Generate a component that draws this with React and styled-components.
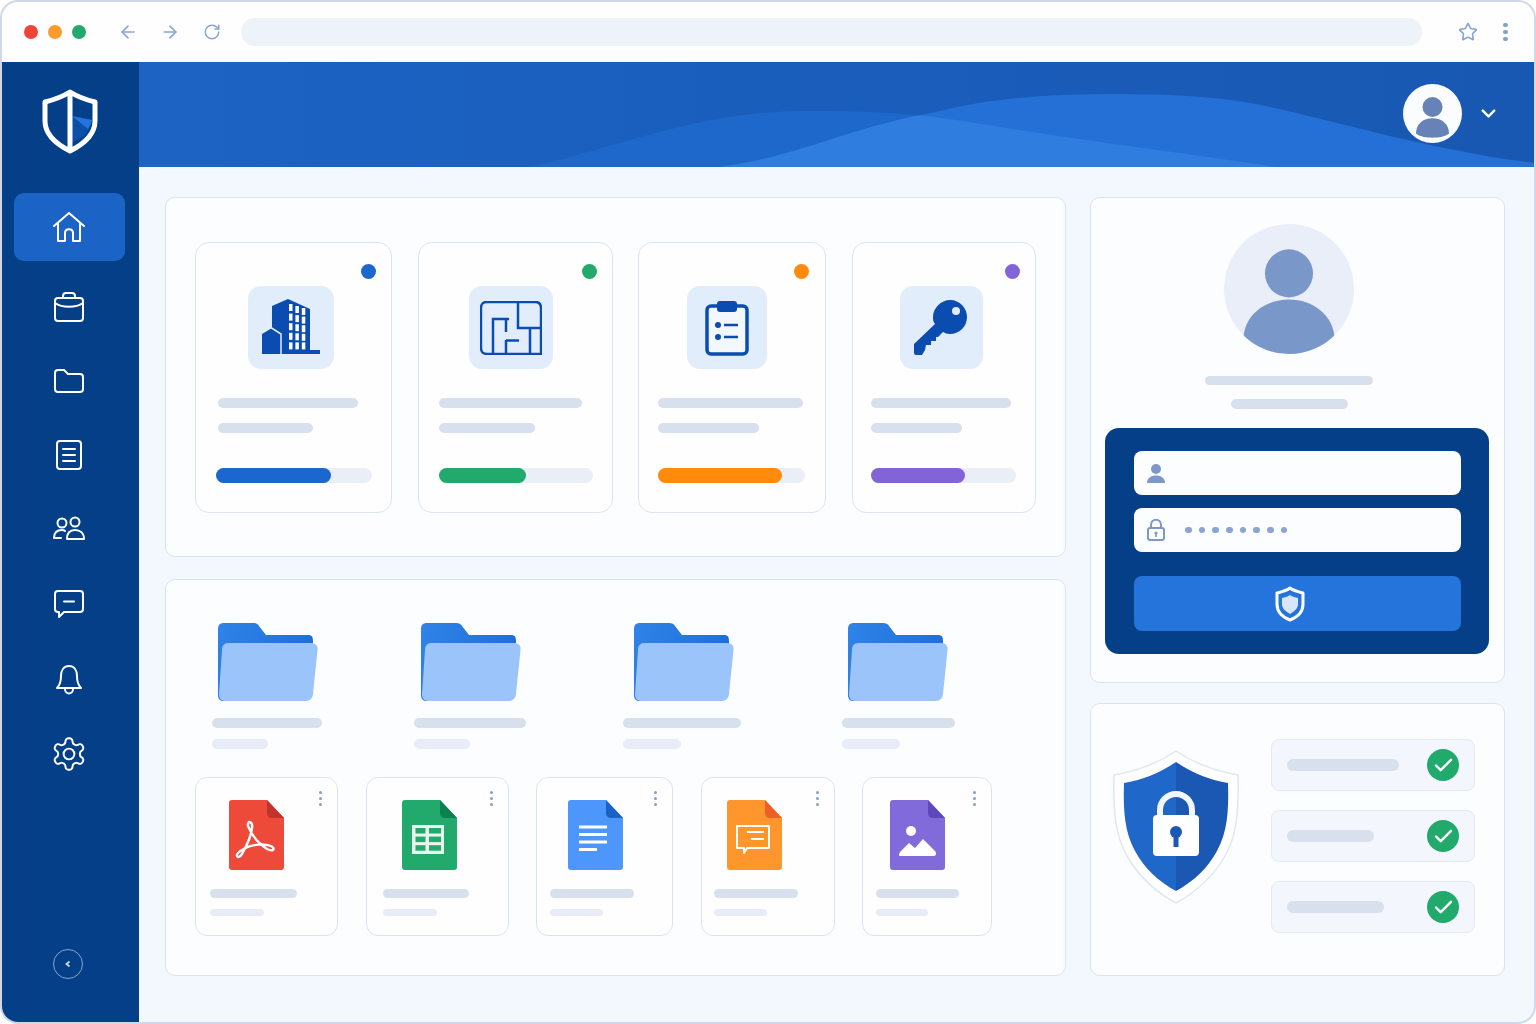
import React from "react";
import styled, { createGlobalStyle } from "styled-components";
import { ArrowLeft, ArrowRight, RotateCw, Star, ChevronDown } from "lucide-react";

const GlobalStyle = createGlobalStyle`
  html, body { margin: 0; padding: 0; background: #fff; }
  body { font-family: "Inter", "Liberation Sans", sans-serif; }
  * { box-sizing: border-box; }
`;

const Frame = styled.div`
  width: 1536px;
  height: 1024px;
  border: 2px solid #cfd7e8;
  border-radius: 18px;
  overflow: hidden;
  display: flex;
  flex-direction: column;
  background: #f3f7fe;
`;

const BrowserBar = styled.div`
  height: 60px;
  flex: none;
  display: flex;
  align-items: center;
  background: #fefefe;
  padding: 0 20px 0 22px;
`;

const Light = styled.span`
  width: 14px;
  height: 14px;
  border-radius: 50%;
  margin-right: 10px;
  background: ${(p) => p.$color};
`;

const ToolIcon = styled.span`
  width: 22px;
  height: 22px;
  display: flex;
  align-items: center;
  justify-content: center;
  color: #8ba5d4;
  margin-left: ${(p) => p.$gap}px;
`;

const AddressBar = styled.div`
  width: 1181px;
  height: 28px;
  border-radius: 14px;
  background: #eef2f9;
  margin-left: 18px;
`;

const Kebab = styled.span`
  display: flex;
  flex-direction: column;
  gap: ${(p) => p.$gap || 2}px;
  margin-left: ${(p) => p.$left || 0}px;
  &::before, &::after, i {
    content: "";
    display: block;
    width: ${(p) => p.$size || 3}px;
    height: ${(p) => p.$size || 3}px;
    border-radius: 50%;
    background: #849fd0;
  }
`;

const Body = styled.div`
  flex: 1;
  display: flex;
  min-height: 0;
`;

const Sidebar = styled.aside`
  width: 137px;
  flex: none;
  background: #053f88;
  display: flex;
  flex-direction: column;
  align-items: center;
  padding: 27px 0 43px;
`;

const LogoWrap = styled.div`
  width: 56px;
  height: 66px;
  margin: 0 0 38px -2px;
`;

const NavList = styled.nav`
  display: flex;
  flex-direction: column;
  align-items: center;
  flex: 1;
`;

const NavItem = styled.a`
  width: 111px;
  height: ${(p) => p.$h}px;
  margin: ${(p) => p.$mt || 0}px 0 0 -2px;
  padding-right: 2px;
  display: flex;
  align-items: center;
  justify-content: center;
  border-radius: 10px;
  background: ${(p) => (p.$active ? "#1c63c6" : "transparent")};
`;

const Collapse = styled.button`
  width: 30px;
  height: 30px;
  border-radius: 50%;
  border: 1.5px solid #8aa6cf;
  background: transparent;
  padding: 0;
  display: flex;
  align-items: center;
  justify-content: center;
  margin-left: -5px;
`;

const Content = styled.div`
  flex: 1;
  display: flex;
  flex-direction: column;
  min-width: 0;
`;

const Banner = styled.header`
  height: 105px;
  flex: none;
  position: relative;
  background: linear-gradient(90deg, #1c63c4, #1858b2);
  display: flex;
  align-items: center;
  justify-content: flex-end;
  padding: 0 34px 3px 0;
  overflow: hidden;
`;

const WaveArt = styled.svg`
  position: absolute;
  inset: 0;
  width: 100%;
  height: 100%;
`;

const HeaderAvatar = styled.div`
  position: relative;
  width: 59px;
  height: 59px;
  border-radius: 50%;
  background: #fbfcfe;
  overflow: hidden;
`;

const HeaderChevron = styled.span`
  position: relative;
  display: flex;
  margin-left: 15px;
  color: #fff;
`;

const Main = styled.main`
  flex: 1;
  display: flex;
  gap: 24px;
  padding: 30px 29px 46px 26px;
  min-height: 0;
`;

const LeftCol = styled.div`
  width: 901px;
  display: flex;
  flex-direction: column;
  gap: 22px;
`;

const RightCol = styled.div`
  width: 415px;
  display: flex;
  flex-direction: column;
  gap: 20px;
`;

const Panel = styled.section`
  height: ${(p) => p.$h}px;
  background: #fcfdff;
  border: 1px solid #dbe3f3;
  border-radius: 10px;
`;

const StatPanel = styled(Panel)`
  display: flex;
  gap: 25.5px;
  padding: 44px 0 0 29px;
`;

const StatCard = styled.article`
  position: relative;
  width: ${(p) => p.$w}px;
  height: 271px;
  background: #fefeff;
  border: 1px solid #dbe3f3;
  border-radius: 14px;
  padding-top: 43px;
`;

const StatusDot = styled.span`
  position: absolute;
  top: 21px;
  right: ${(p) => p.$right}px;
  width: 15px;
  height: 15px;
  border-radius: 50%;
  background: ${(p) => p.$color};
`;

const IconTile = styled.div`
  width: ${(p) => p.$w}px;
  height: 83px;
  margin-left: ${(p) => p.$left}px;
  background: #e2edfb;
  border-radius: 13px;
  display: flex;
  align-items: center;
  justify-content: center;
`;

const Bar = styled.div`
  height: ${(p) => p.$h || 10}px;
  width: ${(p) => p.$w}px;
  margin-left: ${(p) => p.$left || 0}px;
  margin-top: ${(p) => p.$top || 0}px;
  border-radius: 6px;
  background: ${(p) => p.$color || "#d9e0ed"};
`;

const Progress = styled.div`
  width: ${(p) => p.$w}px;
  height: 15px;
  margin: 35px 0 0 ${(p) => p.$left}px;
  border-radius: 8px;
  background: #e9eef7;
`;

const ProgressFill = styled.div`
  height: 100%;
  border-radius: 8px;
  background: ${(p) => p.$color};
`;

const DrivePanel = styled(Panel)`
  padding: 43px 0 0 29px;
`;

const FolderRow = styled.div`
  display: flex;
  height: 154px;
`;

const FolderItem = styled.div`
  width: ${(p) => p.$w}px;
`;

const FolderSlot = styled.div`
  height: 78px;
  margin-left: 23px;
`;

const FileRow = styled.div`
  display: flex;
  gap: 27.5px;
`;

const FileCard = styled.article`
  position: relative;
  width: ${(p) => p.$w}px;
  height: 159px;
  background: #fefeff;
  border: 1px solid #dbe3f3;
  border-radius: 12px;
  padding: 22px 0 0 ${(p) => p.$pad}px;
`;

const FileMenu = styled(Kebab)`
  position: absolute;
  top: 13px;
  right: 15px;
`;

const ProfilePanel = styled(Panel)`
  display: flex;
  flex-direction: column;
  align-items: center;
  padding: 26px 15px 0 14px;
`;

const Portrait = styled.div`
  width: 130px;
  height: 130px;
  margin-left: -16px;
  flex: none;
  border-radius: 50%;
  background: #e9eef8;
  overflow: hidden;
`;

const LoginBox = styled.form`
  align-self: stretch;
  height: 226px;
  margin-top: 19px;
  background: #053f88;
  border-radius: 14px;
  padding: 23px 28px 0 29px;
`;

const Field = styled.div`
  height: 44px;
  margin-bottom: 13px;
  background: #fcfdff;
  border-radius: 8px;
  display: flex;
  align-items: center;
  gap: 19px;
  padding-left: 12px;
`;

const Dots = styled.div`
  display: flex;
  gap: 7.2px;
`;

const Dot = styled.span`
  width: 6.5px;
  height: 6.5px;
  border-radius: 50%;
  background: #8ba5d2;
`;

const SubmitButton = styled.button`
  width: 100%;
  height: 55px;
  margin-top: 24px;
  padding: 0 15px 0 0;
  border: 0;
  border-radius: 8px;
  background: #2474dc;
  display: flex;
  align-items: center;
  justify-content: center;
`;

const SecurityPanel = styled(Panel)`
  display: flex;
  padding: 35px 0 0 22px;
  gap: 32px;
`;

const ShieldSlot = styled.div`
  padding-top: 11px;
`;

const CheckList = styled.div`
  display: flex;
  flex-direction: column;
  gap: 19px;
`;

const CheckRow = styled.div`
  width: 204px;
  height: 52px;
  background: #f3f6fc;
  border: 1px solid #e3e9f5;
  border-radius: 8px;
  display: flex;
  align-items: center;
  justify-content: space-between;
  padding: 0 15px;
`;

const CheckBadge = styled.span`
  width: 32px;
  height: 32px;
  border-radius: 50%;
  background: #22a96c;
  display: flex;
  align-items: center;
  justify-content: center;
`;

const navStroke = {
  fill: "none",
  stroke: "#fff",
  strokeWidth: 2,
  strokeLinecap: "round",
  strokeLinejoin: "round",
};

const Logo = () => (
  <svg viewBox="0 0 56 66" width="56" height="66">
    <path d="M28 3 C36 8 45 11 53 13 V32 C53 45 42 55 28 62 C14 55 3 45 3 32 V13 C11 11 20 8 28 3Z" fill="#053f88" />
    <path d="M30 27 L50 31 C49 37 46 43 42 47 L30 54 Z" fill="#0d4ea8" />
    <path d="M30 27 L50 31 C49 34 48 37 46 40 Z" fill="#2474dc" />
    <path d="M28 3 C36 8 45 11 53 13 V32 C53 45 42 55 28 62 C14 55 3 45 3 32 V13 C11 11 20 8 28 3Z M28 3 V62" fill="none" stroke="#fff" strokeWidth="5" strokeLinejoin="round" />
  </svg>
);

const HomeIcon = () => (
  <svg viewBox="0 0 34 32" width="34" height="32" {...navStroke}>
    <path d="M2 15 L17 2 L32 15" />
    <path d="M6 12 V30 H13 V22 C13 17 21 17 21 22 V30 H28 V12" />
  </svg>
);

const BriefcaseIcon = () => (
  <svg viewBox="0 0 32 32" width="32" height="32" {...navStroke}>
    <rect x="2" y="7" width="28" height="23" rx="3" />
    <path d="M10 7 V5 C10 3 11 2 13 2 H19 C21 2 22 3 22 5 V7" />
    <path d="M2 12 C9 17 23 17 30 12" />
  </svg>
);

const FolderIcon = () => (
  <svg viewBox="0 0 32 26" width="32" height="26" {...navStroke}>
    <path d="M2 5 C2 3 3 2 5 2 H11 L15 6 H27 C29 6 30 7 30 9 V21 C30 23 29 24 27 24 H5 C3 24 2 23 2 21 Z" />
  </svg>
);

const DocIcon = () => (
  <svg viewBox="0 0 28 32" width="28" height="32" {...navStroke}>
    <rect x="2" y="2" width="24" height="28" rx="3" />
    <path d="M8 10 H20 M8 16 H20 M8 22 H20" />
  </svg>
);

const UsersIcon = () => (
  <svg viewBox="0 0 34 26" width="34" height="26" {...navStroke}>
    <circle cx="10" cy="7" r="4.5" />
    <circle cx="23" cy="6" r="4.5" />
    <path d="M2 22 C2 16 6 14 10 14 C11 14 12 14 13 15 M9 22 H2" />
    <path d="M15 23 C15 16 19 14 23 14 C28 14 32 17 32 23 Z" />
  </svg>
);

const ChatIcon = () => (
  <svg viewBox="0 0 32 30" width="32" height="30" {...navStroke}>
    <path d="M5 2 H27 C29 2 30 3 30 5 V20 C30 22 29 23 27 23 H11 L6 28 V23 H5 C3 23 2 22 2 20 V5 C2 3 3 2 5 2Z" />
    <path d="M11 12.5 H21" />
  </svg>
);

const BellIcon = () => (
  <svg viewBox="0 0 28 32" width="28" height="32" {...navStroke}>
    <path d="M2 24 C5 21 6 18 6 12 C6 6 9 2 14 2 C19 2 22 6 22 12 C22 18 23 21 26 24 Z" />
    <path d="M10 25 C10 31 18 31 18 25" />
  </svg>
);

const GearIcon = () => (
  <svg viewBox="0 0 24 24" width="38" height="38" fill="none" stroke="#fff" strokeWidth="1.25" strokeLinecap="round" strokeLinejoin="round">
    <path d="M12.22 2h-.44a2 2 0 0 0-2 2v.18a2 2 0 0 1-1 1.73l-.43.25a2 2 0 0 1-2 0l-.15-.08a2 2 0 0 0-2.73.73l-.22.38a2 2 0 0 0 .73 2.73l.15.1a2 2 0 0 1 1 1.72v.51a2 2 0 0 1-1 1.74l-.15.09a2 2 0 0 0-.73 2.73l.22.38a2 2 0 0 0 2.73.73l.15-.08a2 2 0 0 1 2 0l.43.25a2 2 0 0 1 1 1.73V20a2 2 0 0 0 2 2h.44a2 2 0 0 0 2-2v-.18a2 2 0 0 1 1-1.73l.43-.25a2 2 0 0 1 2 0l.15.08a2 2 0 0 0 2.73-.73l.22-.39a2 2 0 0 0-.73-2.73l-.15-.08a2 2 0 0 1-1-1.74v-.5a2 2 0 0 1 1-1.74l.15-.09a2 2 0 0 0 .73-2.73l-.22-.38a2 2 0 0 0-2.73-.73l-.15.08a2 2 0 0 1-2 0l-.43-.25a2 2 0 0 1-1-1.73V4a2 2 0 0 0-2-2z" />
    <circle cx="12" cy="12" r="3.4" />
  </svg>
);

const BuildingArt = () => (
  <svg viewBox="0 0 60 60" width="60" height="60">
    <path d="M11 8 L27 1 L49 11 V52 H59 V56 H1 V36 L11 30 Z" fill="#0b4cb0" />
    <path d="M9 29 L20 36 V56" fill="none" stroke="#e2edfb" strokeWidth="1.5" />
    {[0, 1, 2].map((c) =>
      [0, 1, 2, 3, 4].map((r) => (
        <rect key={`${c}-${r}`} x={28 + c * 6.4} y={6 + c * 2 + r * (9.6 - c * 0.5)} width="3.5" height="7" fill="#fff" />
      ))
    )}
  </svg>
);

const PlanArt = () => (
  <svg viewBox="0 0 62 54" width="62" height="54" fill="none" stroke="#0b4cb0" strokeWidth="2.4">
    <path d="M7 1 H55 C59 1 61 3 61 7 V53 H7 C3 53 1 51 1 47 V7 C1 3 3 1 7 1Z" />
    <path d="M38 1 V27 H61" strokeWidth="2.5" />
    <path d="M13 52 V18 H29 M26 18 V31 M26 39 V52 M26 39.5 H39 M50 28 V52" strokeWidth="2.5" />
  </svg>
);

const ClipboardArt = () => (
  <svg viewBox="0 0 44 56" width="44" height="56">
    <rect x="2" y="6" width="40" height="48" rx="4" fill="#f3f7fe" stroke="#0b4cb0" strokeWidth="3.5" />
    <rect x="12" y="1" width="20" height="11" rx="3" fill="#0b4cb0" />
    <circle cx="13" cy="25" r="3" fill="#0b4cb0" />
    <circle cx="13" cy="37" r="3" fill="#0b4cb0" />
    <path d="M19 25 H33 M19 37 H33" stroke="#0b4cb0" strokeWidth="2.5" />
  </svg>
);

const KeyArt = () => (
  <svg viewBox="0 0 54 56" width="54" height="56">
    <path d="M36 0 C46 0 53 8 53 17 C53 27 45 34 36 34 C33 34 31 33 29 32 L24 37 L22 37 L22 41 L17 41 L17 45 L12 45 L11 50 L8 55 H2 C1 55 0 54 0 53 V44 L21 24 C19 22 19 19 19 17 C19 8 27 0 36 0Z" fill="#0b4cb0" />
    <circle cx="42" cy="11" r="4" fill="#e2edfb" />
  </svg>
);

const FolderArt = () => (
  <svg viewBox="0 0 100 78" width="100" height="78">
    <defs>
      <linearGradient id="folderBack" x1="0" y1="0" x2="1" y2="0.2">
        <stop offset="0" stopColor="#2f84e8" />
        <stop offset="1" stopColor="#1f6fd8" />
      </linearGradient>
    </defs>
    <path d="M0 6 C0 2 2 0 6 0 H35 C38 0 40 1 41 3 L48 12 H90 C94 12 95 14 95 18 V60 H20 L8 78 H6 C2 78 0 76 0 72 Z" fill="url(#folderBack)" />
    <path d="M4 27 C4 23 6 20 10 20 H93 C98 20 100 23 99.5 27 L95 71 C94.5 75 92 78 88 78 H7 C3 78 1 75 1 71 Z" fill="#9bc4fb" />
  </svg>
);

const DocBase = ({ fill, fold, children }) => (
  <svg viewBox="0 0 55 70" width="55" height="70">
    <path d="M3 0 H38 L55 18 V67 C55 69 54 70 52 70 H3 C1 70 0 69 0 67 V3 C0 1 1 0 3 0Z" fill={fill} />
    <path d="M38 0 L55 18 H43 C40 18 38 16 38 13 Z" fill={fold} />
    {children}
  </svg>
);

const PdfArt = () => (
  <DocBase fill="#ee4a3a" fold="#c0342c">
    <path d="M19 26 C18 20 24 21 23 28 C22 37 17 47 13 54 C9 60 6 56 10 52 C20 44 34 43 42 46 C47 49 44 52 38 49 C30 44 23 36 19 26Z" fill="none" stroke="#fff" strokeWidth="2.4" strokeLinejoin="round" />
  </DocBase>
);

const SheetArt = () => (
  <DocBase fill="#22a96c" fold="#0b8150">
    <rect x="10" y="25" width="32" height="29" fill="#e8f5ee" />
    {[0, 1, 2].map((r) =>
      [0, 1].map((c) => (
        <rect key={`${r}-${c}`} x={c ? 27 : 13.5} y={28 + r * 8.6} width={c ? 12 : 10} height="5.5" fill="#22a96c" />
      ))
    )}
  </DocBase>
);

const TextArt = () => (
  <DocBase fill="#4d96fb" fold="#1a62c4">
    <path d="M11 27 H39 M11 34.5 H39 M11 42 H39 M11 49.5 H29" stroke="#fff" strokeWidth="3" />
  </DocBase>
);

const SlideArt = () => (
  <DocBase fill="#ff962d" fold="#ec5f26">
    <path d="M10 26 H42 V48 H20 L17 53 L17 48 H10 Z" fill="none" stroke="#fff" strokeWidth="2" strokeLinejoin="round" />
    <path d="M20 32 H37 M24 39 H37" stroke="#fff" strokeWidth="2" />
  </DocBase>
);

const ImageArt = () => (
  <DocBase fill="#816ad9" fold="#5f48bd">
    <circle cx="21" cy="31" r="5" fill="#fff" />
    <path d="M9 55 C9 53 10 52 11 51 L19 43 L25 48 L33 39 L45 51 C47 53 46 56 44 56 H11 C10 56 9 56 9 55Z" fill="#fff" />
  </DocBase>
);

const PersonArt = ({ size, color, head, body, cy }) => (
  <svg viewBox="0 0 100 100" width={size} height={size}>
    <circle cx="50" cy={cy} r={head} fill={color} />
    <path d={body} fill={color} />
  </svg>
);

const ShieldMini = () => (
  <svg viewBox="0 0 32 36" width="32" height="36">
    <path d="M16 2 C20 5 25 6 29 7 V18 C29 26 24 31 16 34 C8 31 3 26 3 18 V7 C7 6 12 5 16 2Z" fill="none" stroke="#fff" strokeWidth="3" strokeLinejoin="round" />
    <path d="M16 9 C19 11 21 11 24 12 V18 C24 22 21 25 16 28 C11 25 8 22 8 18 V12 C11 11 13 11 16 9Z" fill="#d8e6fb" />
  </svg>
);

const LockLine = () => (
  <svg viewBox="0 0 20 24" width="20" height="24" fill="none" stroke="#7c97c8" strokeWidth="2">
    <rect x="2" y="10" width="16" height="12" rx="2" />
    <path d="M5 10 V7 C5 0 15 0 15 7 V10" />
    <circle cx="10" cy="15" r="1.6" fill="#7c97c8" stroke="none" />
    <path d="M10 15 V19" strokeWidth="1.6" />
  </svg>
);

const BigShield = () => (
  <svg viewBox="0 0 126 154" width="126" height="154">
    <path d="M63 1 C82 14 102 21 125 25 C126 60 124 85 112 106 C101 125 85 141 63 153 C41 141 25 125 14 106 C2 85 0 60 1 25 C24 21 44 14 63 1Z" fill="#fff" stroke="#dfe6f4" strokeWidth="1.5" />
    <path d="M63 12 C81 24 98 30 115 33 C116 62 114 83 104 101 C94 119 81 131 63 141 Z" fill="#1a58b4" />
    <path d="M63 12 C45 24 28 30 11 33 C10 62 12 83 22 101 C32 119 45 131 63 141 Z" fill="#1f68c9" />
    <path d="M47 66 V60 A16 16 0 0 1 79 60 V66" fill="none" stroke="#f3f6fc" strokeWidth="6" />
    <rect x="40" y="65" width="46" height="41" rx="4" fill="#fff" />
    <circle cx="63" cy="82" r="6" fill="#1a58b4" />
    <rect x="60.5" y="83" width="5" height="14" fill="#1a58b4" />
  </svg>
);

const CheckMark = () => (
  <svg viewBox="0 0 20 16" width="19" height="15" fill="none" stroke="#fff" strokeWidth="2.6" strokeLinecap="round" strokeLinejoin="round">
    <path d="M2 8 L7 13 L18 2" />
  </svg>
);

const navItems = [
  { key: "home", icon: <HomeIcon />, h: 68, active: true },
  { key: "work", icon: <BriefcaseIcon />, h: 74, mt: 9 },
  { key: "folder", icon: <FolderIcon />, h: 74 },
  { key: "doc", icon: <DocIcon />, h: 74 },
  { key: "users", icon: <UsersIcon />, h: 74 },
  { key: "chat", icon: <ChatIcon />, h: 76 },
  { key: "bell", icon: <BellIcon />, h: 76 },
  { key: "gear", icon: <GearIcon />, h: 72 },
];

const stats = [
  { w: 197, dot: 15, color: "#1c66cf", art: <BuildingArt />, tile: 86, tl: 52, l1: 140, l2: 95, ll: 22, pw: 156, pl: 20, fill: 115 },
  { w: 195, dot: 15, color: "#22a96c", art: <PlanArt />, tile: 84, tl: 50, l1: 143, l2: 96, ll: 20, pw: 154, pl: 20, fill: 87 },
  { w: 188, dot: 16.5, color: "#ff8a0b", art: <ClipboardArt />, tile: 80, tl: 48, l1: 145, l2: 101, ll: 19, pw: 147, pl: 19, fill: 124 },
  { w: 184, dot: 14.5, color: "#8263d8", art: <KeyArt />, tile: 83, tl: 47, l1: 140, l2: 91, ll: 18, pw: 145, pl: 18, fill: 94 },
];

const folders = [
  { w: 203, l1: 110, l2: 56, left: 17 },
  { w: 213, l1: 112, l2: 56, left: 16 },
  { w: 214, l1: 118, l2: 58, left: 12 },
  { w: 214, l1: 113, l2: 58, left: 17 },
];

const files = [
  { w: 143, art: <PdfArt />, pad: 33, l1: 87, l2: 54, ll: -19 },
  { w: 143, art: <SheetArt />, pad: 35, l1: 86, l2: 54, ll: -19 },
  { w: 137, art: <TextArt />, pad: 31, l1: 84, l2: 53, ll: -18 },
  { w: 134, art: <SlideArt />, pad: 25, l1: 84, l2: 53, ll: -13 },
  { w: 130, art: <ImageArt />, pad: 27, l1: 83, l2: 52, ll: -14 },
];

const checks = [112, 87, 97];

const waveA = "M391 105 C480 85 560 49 667 49 C720 49 770 50 830 60 C920 75 1000 85 1138 105 Z";
const waveB = "M580 105 C660 95 710 65 797 50 C850 36 910 32 971 32 C1050 32 1090 36 1131 45 C1200 60 1300 90 1397 101 V105 Z";

export default function App() {
  return (
    <>
      <GlobalStyle />
      <Frame>
        <BrowserBar>
          <Light $color="#f04438" />
          <Light $color="#ff9a2e" />
          <Light $color="#22a96c" />
          <ToolIcon $gap={21}><ArrowLeft size={20} strokeWidth={2} /></ToolIcon>
          <ToolIcon $gap={20}><ArrowRight size={20} strokeWidth={2} /></ToolIcon>
          <ToolIcon $gap={20}><RotateCw size={18} strokeWidth={2} /></ToolIcon>
          <AddressBar />
          <ToolIcon $gap={35}><Star size={20} strokeWidth={2} /></ToolIcon>
          <Kebab $gap={2.5} $size={4.5} $left={24}><i /></Kebab>
        </BrowserBar>
        <Body>
          <Sidebar>
            <LogoWrap><Logo /></LogoWrap>
            <NavList>
              {navItems.map((n) => (
                <NavItem key={n.key} $h={n.h} $mt={n.mt} $active={n.active}>{n.icon}</NavItem>
              ))}
            </NavList>
            <Collapse aria-label="Collapse">
              <svg viewBox="0 0 8 8" width="8" height="8" fill="none" stroke="#c6d5ea" strokeWidth="1.8">
                <path d="M5.5 1.5 L2.5 4 L5.5 6.5" />
              </svg>
            </Collapse>
          </Sidebar>
          <Content>
            <Banner>
              <WaveArt viewBox="0 0 1395 105" preserveAspectRatio="none">
                <defs>
                  <clipPath id="waveOverlap"><path d={waveA} /></clipPath>
                </defs>
                <path d={waveA} fill="#1e68cb" />
                <path d={waveB} fill="#2470d6" />
                <path d={waveB} fill="#2e7ddf" clipPath="url(#waveOverlap)" />
              </WaveArt>
              <HeaderAvatar>
                <PersonArt size={59} color="#6682b6" cy={39} head={17} body="M22 84 C22 68 34 58 50 58 C66 58 78 68 78 84 C70 90 60 91 50 91 C40 91 30 90 22 84Z" />
              </HeaderAvatar>
              <HeaderChevron><ChevronDown size={23} strokeWidth={2.6} /></HeaderChevron>
            </Banner>
            <Main>
              <LeftCol>
                <StatPanel $h={360}>
                  {stats.map((s) => (
                    <StatCard key={s.color} $w={s.w}>
                      <StatusDot $color={s.color} $right={s.dot} />
                      <IconTile $w={s.tile} $left={s.tl}>{s.art}</IconTile>
                      <Bar $w={s.l1} $left={s.ll} $top={29} />
                      <Bar $w={s.l2} $left={s.ll} $top={15} />
                      <Progress $w={s.pw} $left={s.pl}>
                        <ProgressFill $color={s.color} style={{ width: s.fill }} />
                      </Progress>
                    </StatCard>
                  ))}
                </StatPanel>
                <DrivePanel $h={397}>
                  <FolderRow>
                    {folders.map((f, i) => (
                      <FolderItem key={i} $w={f.w}>
                        <FolderSlot><FolderArt /></FolderSlot>
                        <Bar $w={f.l1} $left={f.left} $top={17} />
                        <Bar $w={f.l2} $left={f.left} $top={11} $color="#e7ecf6" />
                      </FolderItem>
                    ))}
                  </FolderRow>
                  <FileRow>
                    {files.map((f, i) => (
                      <FileCard key={i} $w={f.w} $pad={f.pad}>
                        <FileMenu $gap={3} $size={3}><i /></FileMenu>
                        {f.art}
                        <Bar $w={f.l1} $left={f.ll} $top={15} $h={9} />
                        <Bar $w={f.l2} $left={f.ll} $top={11} $h={7} $color="#e7ecf6" />
                      </FileCard>
                    ))}
                  </FileRow>
                </DrivePanel>
              </LeftCol>
              <RightCol>
                <ProfilePanel $h={486}>
                  <Portrait>
                    <PersonArt size={130} color="#7a97c9" cy={38} head={18.5} body="M15 89 C15 70 32 58 50 58 C68 58 85 70 85 89 C78 96 64 102 50 102 C36 102 22 96 15 89Z" />
                  </Portrait>
                  <Bar $w={168} $h={9} $top={22} $left={-16} />
                  <Bar $w={117} $h={10} $top={14} $left={-16} />
                  <LoginBox>
                    <Field>
                      <svg viewBox="0 0 20 20" width="20" height="20" fill="#7c97c8">
                        <circle cx="10" cy="6" r="5" />
                        <path d="M1 20 C1 15 5 12.5 10 12.5 C15 12.5 19 15 19 20 Z" />
                      </svg>
                    </Field>
                    <Field>
                      <LockLine />
                      <Dots>
                        {Array.from({ length: 8 }).map((_, i) => <Dot key={i} />)}
                      </Dots>
                    </Field>
                    <SubmitButton type="button" aria-label="Sign in"><ShieldMini /></SubmitButton>
                  </LoginBox>
                </ProfilePanel>
                <SecurityPanel $h={273}>
                  <ShieldSlot><BigShield /></ShieldSlot>
                  <CheckList>
                    {checks.map((w) => (
                      <CheckRow key={w}>
                        <Bar $w={w} $h={12} />
                        <CheckBadge><CheckMark /></CheckBadge>
                      </CheckRow>
                    ))}
                  </CheckList>
                </SecurityPanel>
              </RightCol>
            </Main>
          </Content>
        </Body>
      </Frame>
    </>
  );
}
